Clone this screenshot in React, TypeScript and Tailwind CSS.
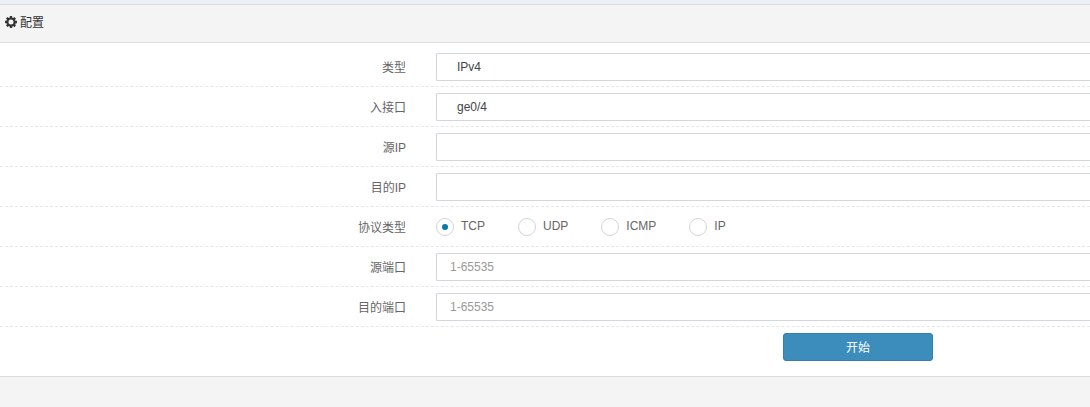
import { useState, type ReactNode } from "react";

const PROTOCOLS = ["TCP", "UDP", "ICMP", "IP"];

const FIELD =
  "block h-7 w-full rounded-l-xs border border-r-0 border-[#d2d6de] bg-white outline-none focus:border-[#3c8dbc]";

export default function App() {
  const [protocol, setProtocol] = useState("TCP");

  return (
    <div className="min-h-screen bg-[#f4f4f4] font-['Liberation_Sans','Noto_Sans_CJK_SC',sans-serif] text-xs text-[#666]">
      <div className="h-1 bg-[#ecf0f5]" />
      <header className="flex h-[39px] items-center gap-[3px] border-y border-[#dcdde0] px-[5px] pb-[3px] text-[#333]">
        <GearIcon />
        <h1 className="pt-0.5">配置</h1>
      </header>

      <form
        className="border-b border-[#dcdde0] bg-white pt-1"
        onSubmit={(e) => e.preventDefault()}
      >
        <Row label="类型" htmlFor="type">
          <select id="type" className={`${FIELD} appearance-none pl-5 text-[#444]`}>
            <option>IPv4</option>
            <option>IPv6</option>
          </select>
        </Row>
        <Row label="入接口" htmlFor="iface">
          <select id="iface" className={`${FIELD} appearance-none pl-5 text-[#444]`}>
            <option>ge0/4</option>
          </select>
        </Row>
        <Row label="源IP" htmlFor="src-ip">
          <input id="src-ip" type="text" className={`${FIELD} px-[13px]`} />
        </Row>
        <Row label="目的IP" htmlFor="dst-ip">
          <input id="dst-ip" type="text" className={`${FIELD} px-[13px]`} />
        </Row>
        <Row label="协议类型">
          <div
            role="radiogroup"
            aria-label="协议类型"
            className="flex h-7 items-center gap-[33px]"
          >
            {PROTOCOLS.map((p) => (
              <label key={p} className="flex items-center gap-[7px]">
                <input
                  type="radio"
                  name="protocol"
                  value={p}
                  checked={protocol === p}
                  onChange={() => setProtocol(p)}
                  className="grid size-[18px] appearance-none place-items-center rounded-full border border-[#d4d4d4] bg-white before:size-1.5 before:rounded-full checked:before:bg-[#0e76a8]"
                />
                <span className="pb-0.5">{p}</span>
              </label>
            ))}
          </div>
        </Row>
        <Row label="源端口" htmlFor="src-port">
          <input
            id="src-port"
            type="text"
            placeholder="1-65535"
            className={`${FIELD} px-[13px] placeholder:text-[#999]`}
          />
        </Row>
        <Row label="目的端口" htmlFor="dst-port">
          <input
            id="dst-port"
            type="text"
            placeholder="1-65535"
            className={`${FIELD} px-[13px] placeholder:text-[#999]`}
          />
        </Row>

        <div className="flex justify-end pt-1.5 pr-[157px] pb-[15px]">
          <button
            type="submit"
            className="h-7 w-[150px] rounded-[3px] border border-[#367fa9] bg-[#3c8dbc] pt-0.5 text-white hover:bg-[#367fa9]"
          >
            开始
          </button>
        </div>
      </form>
    </div>
  );
}

interface RowProps {
  label: string;
  htmlFor?: string;
  children: ReactNode;
}

function Row({ label, htmlFor, children }: RowProps) {
  const labelClass = "w-2/5 shrink-0 pt-0.5 pr-[30px] text-right";
  return (
    <div className="flex items-center border-b border-dashed border-[#e7e7e7] pt-1.5 pb-[5px]">
      {htmlFor ? (
        <label htmlFor={htmlFor} className={labelClass}>
          {label}
        </label>
      ) : (
        <span className={labelClass}>{label}</span>
      )}
      <div className="min-w-0 flex-1">{children}</div>
    </div>
  );
}

function GearIcon() {
  return (
    <svg
      viewBox="128 128 1536 1536"
      className="size-3"
      fill="currentColor"
      fillRule="evenodd"
      aria-hidden="true"
    >
      <path d="M1216 896a320 320 0 1 0-640 0 320 320 0 1 0 640 0zM1664 787v222q0 12-8 23t-20 13l-185 28q-19 54-39 91 35 50 107 138 10 12 10 25t-9 23q-27 37-99 108t-94 71q-12 0-26-9l-138-108q-44 23-91 38-16 136-29 186-7 28-36 28h-222q-14 0-24.5-8.5t-11.5-21.5l-28-184q-49-16-90-37l-141 107q-10 9-25 9-14 0-25-11-126-114-165-168-7-10-7-23 0-12 8-23 15-21 51-66.5t54-70.5q-27-50-41-99l-183-27q-13-2-21-12.5t-8-23.5v-222q0-12 8-23t19-13l186-28q14-46 39-92-40-57-107-138-10-12-10-24 0-10 9-23 26-36 98.5-107.5t94.5-71.5q13 0 26 10l138 107q44-23 91-38 16-136 29-186 7-28 36-28h222q14 0 24.5 8.5t11.5 21.5l28 184q49 16 90 37l142-107q9-9 24-9 13 0 25 10 129 119 165 170 7 8 7 22 0 12-8 23-15 21-51 66.5t-54 70.5q26 50 41 98l183 28q13 2 21 12.5t8 23.5z" />
    </svg>
  );
}
